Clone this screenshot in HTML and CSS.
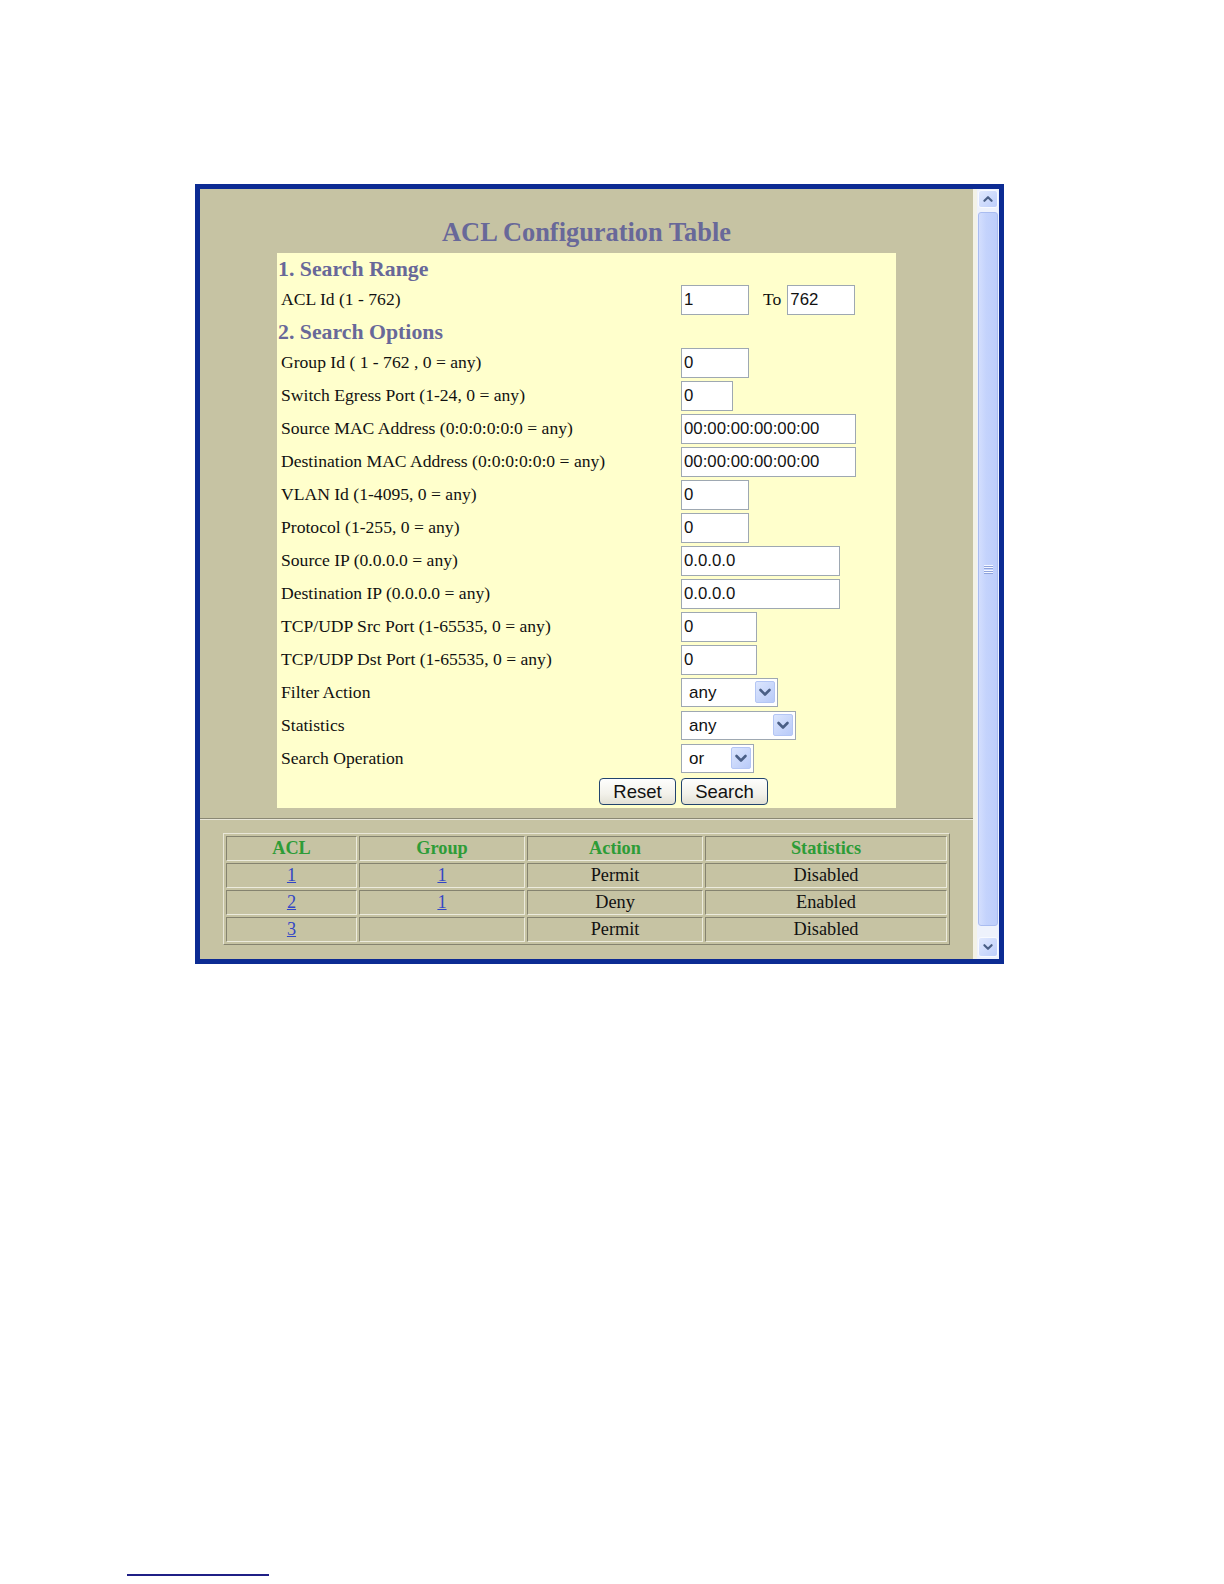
FILE: index.html
```html
<!DOCTYPE html>
<html>
<head>
<meta charset="utf-8">
<title>ACL Configuration Table</title>
<link rel="stylesheet" href="styles.css">
</head>
<body>
<div class="page">
  <div class="frame">
    <div class="content">
      <h1 class="title">ACL Configuration Table</h1>
      <form class="panel">
        <div class="heading">1. Search Range</div>
        <div class="label">ACL Id (1 - 762)</div>
        <div class="field"><input class="text w68" value="1"><span class="to">To</span><input class="text w68" value="762"></div>

        <div class="heading">2. Search Options</div>
        <div class="label">Group Id ( 1 - 762 , 0 = any)</div>
        <div class="field"><input class="text w68" value="0"></div>

        <div class="label">Switch Egress Port (1-24, 0 = any)</div>
        <div class="field"><input class="text w52" value="0"></div>

        <div class="label">Source MAC Address (0:0:0:0:0:0 = any)</div>
        <div class="field"><input class="text w175" value="00:00:00:00:00:00"></div>

        <div class="label">Destination MAC Address (0:0:0:0:0:0 = any)</div>
        <div class="field"><input class="text w175" value="00:00:00:00:00:00"></div>

        <div class="label">VLAN Id (1-4095, 0 = any)</div>
        <div class="field"><input class="text w68" value="0"></div>

        <div class="label">Protocol (1-255, 0 = any)</div>
        <div class="field"><input class="text w68" value="0"></div>

        <div class="label">Source IP (0.0.0.0 = any)</div>
        <div class="field"><input class="text w159" value="0.0.0.0"></div>

        <div class="label">Destination IP (0.0.0.0 = any)</div>
        <div class="field"><input class="text w159" value="0.0.0.0"></div>

        <div class="label">TCP/UDP Src Port (1-65535, 0 = any)</div>
        <div class="field"><input class="text w76" value="0"></div>

        <div class="label">TCP/UDP Dst Port (1-65535, 0 = any)</div>
        <div class="field"><input class="text w76" value="0"></div>

        <div class="label">Filter Action</div>
        <div class="field">
          <div class="select w97"><select><option>any</option><option>permit</option><option>deny</option></select><span class="arrow"><svg viewBox="0 0 20 22" width="20" height="22"><path d="M5.5 9 L10 13.5 L14.5 9" fill="none" stroke="#4a5f86" stroke-width="2.6" stroke-linecap="round" stroke-linejoin="round"/></svg></span></div>
        </div>

        <div class="label">Statistics</div>
        <div class="field">
          <div class="select w115"><select><option>any</option><option>enabled</option><option>disabled</option></select><span class="arrow"><svg viewBox="0 0 20 22" width="20" height="22"><path d="M5.5 9 L10 13.5 L14.5 9" fill="none" stroke="#4a5f86" stroke-width="2.6" stroke-linecap="round" stroke-linejoin="round"/></svg></span></div>
        </div>

        <div class="label">Search Operation</div>
        <div class="field">
          <div class="select w73"><select><option>or</option><option>and</option></select><span class="arrow"><svg viewBox="0 0 20 22" width="20" height="22"><path d="M5.5 9 L10 13.5 L14.5 9" fill="none" stroke="#4a5f86" stroke-width="2.6" stroke-linecap="round" stroke-linejoin="round"/></svg></span></div>
        </div>

        <div class="btn-cell"><button type="reset" class="btn w77">Reset</button></div>
        <div class="field"><button type="button" class="btn w87">Search</button></div>
      </form>

      <hr class="divider">

      <table class="results">
        <thead>
          <tr><th class="c1">ACL</th><th class="c2">Group</th><th class="c3">Action</th><th class="c4">Statistics</th></tr>
        </thead>
        <tbody>
          <tr><td><a href="#">1</a></td><td><a href="#">1</a></td><td>Permit</td><td>Disabled</td></tr>
          <tr><td><a href="#">2</a></td><td><a href="#">1</a></td><td>Deny</td><td>Enabled</td></tr>
          <tr><td><a href="#">3</a></td><td></td><td>Permit</td><td>Disabled</td></tr>
        </tbody>
      </table>
    </div>

    <div class="scrollbar">
      <div class="sb-btn sb-up"><svg viewBox="0 0 20 18" width="20" height="18"><path d="M6 11 L10 7 L14 11" fill="none" stroke="#4a5f86" stroke-width="2.4" stroke-linecap="round" stroke-linejoin="round"/></svg></div>
      <div class="sb-thumb"><span class="grip"></span></div>
      <div class="sb-btn sb-down"><svg viewBox="0 0 20 20" width="20" height="20"><path d="M6 8 L10 12 L14 8" fill="none" stroke="#4a5f86" stroke-width="2.4" stroke-linecap="round" stroke-linejoin="round"/></svg></div>
    </div>
  </div>
</div>
<div class="footnote-rule"></div>
</body>
</html>
```

FILE: styles.css
```css
html, body {
  margin: 0;
  padding: 0;
  background: #ffffff;
}

body {
  font-family: "Liberation Serif", "Times New Roman", serif;
  color: #111;
}

.page {
  padding: 184px 0 0 195px;
}

.frame {
  box-sizing: border-box;
  width: 809px;
  height: 780px;
  border: 5px solid #0c2b93;
  display: flex;
  background: #c6c3a3;
}

.content {
  flex: 1;
  display: flex;
  flex-direction: column;
  min-width: 0;
}

.title {
  margin: 0 0 6px 0;
  padding-top: 28px;
  height: 30px;
  line-height: 30px;
  text-align: center;
  font-size: 26.4px;
  font-weight: bold;
  color: #686899;
}

.panel {
  width: 619px;
  margin: 0 auto;
  background: #ffffcc;
  display: grid;
  grid-template-columns: 404px 1fr;
  grid-template-rows: 30px 33px 30px repeat(14, 33px);
}

.heading {
  grid-column: 1 / 3;
  padding-left: 1px;
  padding-top: 2px;
  font-size: 21.8px;
  font-weight: bold;
  color: #686899;
  display: flex;
  align-items: center;
}

.label {
  padding-left: 4px;
  font-size: 17.6px;
  display: flex;
  align-items: center;
  white-space: nowrap;
  color: #111;
}

.field {
  display: flex;
  align-items: center;
}

.btn-cell {
  display: flex;
  align-items: center;
  justify-content: flex-end;
  padding-right: 5px;
}

.text {
  box-sizing: border-box;
  height: 30px;
  margin: 0;
  padding: 0 2px;
  border: 1px solid #9ea8b2;
  background: #fff;
  font-family: "Liberation Sans", Arial, sans-serif;
  font-size: 16.8px;
  color: #111;
  outline: none;
}

.to {
  font-size: 17.6px;
  margin: 0 6px 0 14px;
}

.w52 { width: 52px; }
.w68 { width: 68px; }
.w73 { width: 73px; }
.w76 { width: 76px; }
.w77 { width: 77px; }
.w87 { width: 87px; }
.w97 { width: 97px; }
.w115 { width: 115px; }
.w159 { width: 159px; }
.w175 { width: 175px; }

.select {
  position: relative;
  height: 29px;
}

.select select {
  -webkit-appearance: none;
  appearance: none;
  box-sizing: border-box;
  width: 100%;
  height: 29px;
  margin: 0;
  padding: 0 0 0 7px;
  border: 1px solid #9ea8b2;
  border-radius: 0;
  background: #fff;
  font-family: "Liberation Sans", Arial, sans-serif;
  font-size: 17px;
  color: #111;
  outline: none;
}

.select .arrow {
  position: absolute;
  right: 3px;
  top: 3px;
  box-sizing: border-box;
  width: 20px;
  height: 22px;
  border: 1px solid #b4c6f4;
  border-radius: 2px;
  background: linear-gradient(135deg, #dce6fe, #b8caf8);
  display: flex;
  align-items: center;
  justify-content: center;
  pointer-events: none;
}

.select .arrow svg {
  display: block;
  margin: -1px;
}

.btn {
  box-sizing: border-box;
  height: 27px;
  margin: 0;
  padding: 0;
  border: 1px solid #22446e;
  border-radius: 4px;
  background: linear-gradient(#fefefd, #f2f1ea 60%, #e2e0d4);
  font-family: "Liberation Sans", Arial, sans-serif;
  font-size: 18.5px;
  color: #111;
  line-height: 25px;
}

.divider {
  margin: 10px 0 0 0;
  height: 0;
  border: 0;
  border-top: 1px solid #8a8874;
  border-bottom: 1px solid #e8e6d8;
}

.results {
  width: 727px;
  margin: 13px auto 0 auto;
  table-layout: fixed;
  border-collapse: separate;
  border-spacing: 2px;
  border: 1px solid;
  border-color: #e9e7d8 #85836f #85836f #e9e7d8;
  font-size: 18.3px;
}

.results th,
.results td {
  padding: 0;
  line-height: 23px;
  text-align: center;
  border: 1px solid;
  border-color: #85836f #ecebdd #ecebdd #85836f;
  white-space: nowrap;
  color: #111;
}

.results th {
  font-weight: bold;
  color: #2d9c37;
}

.results .c1 { width: 129px; }
.results .c2 { width: 164px; }
.results .c3 { width: 174px; }
.results .c4 { width: 240px; }

.results a {
  color: #3346c6;
  text-decoration: underline;
}

.scrollbar {
  width: 22px;
  border-left: 4px solid #f3f2e7;
  background: #eef2fc;
  display: flex;
  flex-direction: column;
  padding: 1px 0 2px 0;
}

.sb-btn {
  box-sizing: border-box;
  width: 20px;
  margin-left: 1px;
  border: 1px solid #f8faff;
  border-radius: 3px;
  background: linear-gradient(135deg, #e1e9fe, #bdcefb);
  display: flex;
  align-items: center;
  justify-content: center;
}

.sb-up { height: 18px; }
.sb-down { height: 20px; margin-top: 11px; }

.sb-btn svg { display: block; }

.sb-thumb {
  flex: 1;
  box-sizing: border-box;
  width: 20px;
  margin: 4px 0 0 1px;
  border: 1px solid #a9bcf0;
  border-radius: 3px;
  background: linear-gradient(to right, #d3defd, #c4d3fc 40%, #bccdfb);
  display: flex;
  align-items: center;
  justify-content: center;
}

.grip {
  display: block;
  width: 9px;
  height: 9px;
  background: repeating-linear-gradient(to bottom, #f4f7ff 0, #f4f7ff 1px, #8ea3dc 1px, #8ea3dc 2px, transparent 2px, transparent 2.25px);
}

.footnote-rule {
  width: 142px;
  margin: 610px 0 0 127px;
  border-top: 2px solid #1f1f86;
}
```
